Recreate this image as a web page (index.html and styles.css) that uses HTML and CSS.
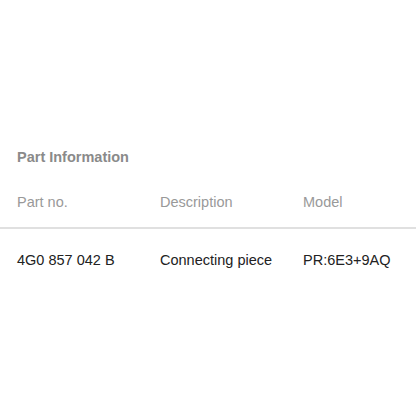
FILE: index.html
```html
<!DOCTYPE html>
<html lang="en">
  <head>
    <meta charset="UTF-8" />
    <meta name="viewport" content="width=device-width, initial-scale=1.0" />
    <title>Part Information</title>
    <link rel="stylesheet" href="styles.css">
  </head>
  <body>
    <div class="part-info">
      <h2 class="section-title">Part Information</h2>
      <table class="part-table">
        <thead>
          <tr>
            <th class="col-part">Part no.</th>
            <th class="col-desc">Description</th>
            <th>Model</th>
          </tr>
        </thead>
        <tbody>
          <tr>
            <td class="col-part">4G0 857 042 B</td>
            <td class="col-desc">Connecting piece</td>
            <td>PR:6E3+9AQ</td>
          </tr>
        </tbody>
      </table>
    </div>
  </body>
</html>
```

FILE: styles.css
```css
body {
  font-family: "Liberation Sans", Arial, sans-serif;
  background-color: #fff;
  color: #222;
  margin: 0;
  padding: 0;
}

.part-info {
  padding-top: 147px;
}

.section-title {
  margin: 0 0 0 17px;
  font-size: 14.5px;
  font-weight: bold;
  line-height: 20px;
  color: #8a8a8a;
}

.part-table {
  width: 100%;
  table-layout: fixed;
  border-collapse: collapse;
  margin-top: 25px;
}

.part-table th,
.part-table td {
  text-align: left;
  font-size: 14.5px;
  line-height: 20px;
  padding: 0;
  white-space: nowrap;
}

.part-table .col-part {
  padding-left: 17px;
  width: 143px;
}

.part-table .col-desc {
  width: 143px;
}

.part-table th {
  font-weight: normal;
  color: #999;
  padding-bottom: 15px;
  border-bottom: 2px solid #e0e0e0;
}

.part-table td {
  color: #222;
  padding-top: 21px;
}
```
